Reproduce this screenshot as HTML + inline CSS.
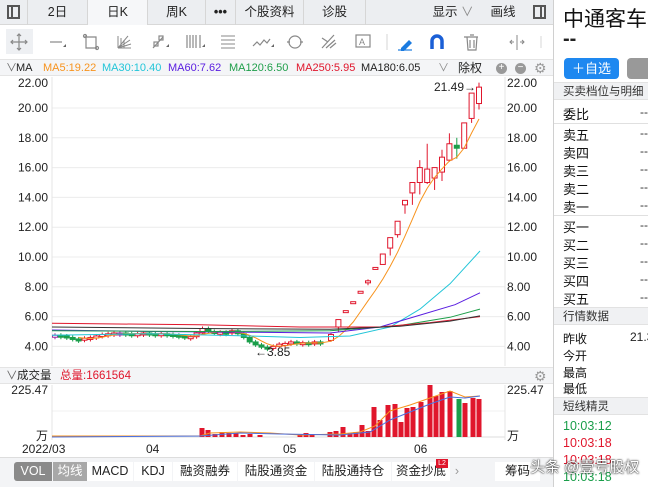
<!DOCTYPE html>
<html><head><meta charset="utf-8"><style>
*{margin:0;padding:0;box-sizing:border-box}
body{width:648px;height:487px;overflow:hidden;background:#fff;font-family:"Liberation Sans","Noto Sans CJK SC",sans-serif;font-size:12px;color:#222;position:relative}
.a{position:absolute;white-space:nowrap}
.tb{position:absolute;top:0;left:0;width:553px;height:25px;background:#eceef1;border-bottom:1px solid #d8d8d8}
.tb div{position:absolute;top:0;height:25px;line-height:25px;text-align:center;font-size:12.5px;border-right:1px solid #d6d6d6}
.rp{position:absolute;left:553px;top:0;width:95px;height:487px;border-left:1px solid #d0d0d0;background:#fff}
.hd{position:absolute;left:0;width:95px;height:18px;background:#f0f1f3;line-height:18px;padding-left:9px;font-size:11.5px;color:#333;border-top:1px solid #e2e2e2;border-bottom:1px solid #e2e2e2}
.rw{position:absolute;left:9px;font-size:13px;color:#111}
.dd{position:absolute;left:86px;font-size:12px;color:#333}
.bt div{position:absolute;top:462px;height:19px;line-height:19px;font-size:12.5px;text-align:center}
</style></head><body>
<div class="tb">
 <div style="left:0;width:28px"><span style="display:inline-block;width:13px;height:14px;border:2px solid #555;margin-top:5px;position:relative"><span style="position:absolute;left:2px;top:0;width:2px;height:10px;background:#555"></span></span></div>
 <div style="left:28px;width:60px">2日</div>
 <div style="left:88px;width:60px;background:#f6f7f9">日K</div>
 <div style="left:148px;width:58px">周K</div>
 <div style="left:206px;width:30px;font-weight:bold">•••</div>
 <div style="left:236px;width:68px">个股资料</div>
 <div style="left:304px;width:62px">诊股</div>
 <div style="left:366px;width:54px;border:none"></div>
 <div style="left:426px;width:54px;border:none">显示 <span style="color:#888">∨</span></div>
 <div style="left:482px;width:42px;border:none">画线</div>
 <div style="left:526px;width:27px;border:none"><span style="display:inline-block;width:13px;height:14px;border:2px solid #555;margin-top:5px;position:relative"><span style="position:absolute;right:2px;top:0;width:2px;height:10px;background:#555"></span></span></div>
</div>
<svg class="a" style="left:0;top:26px" width="553" height="32" fill="none" stroke="#888" stroke-width="1.2">
 <rect x="6" y="3" width="27" height="25" fill="#eef0f3" stroke="none"/>
 <path d="M19 8v16M11 16h16M17 10l2-2 2 2M17 22l2 2 2-2M13 14l-2 2 2 2M25 14l2 2-2 2"/>
 <path d="M50 16h12"/><path d="M63 21l3 0 0-3z" fill="#666" stroke="none"/>
 <path d="M86 9v13h11M84 11h12v12" /><circle cx="85" cy="10" r="1.5"/><circle cx="97" cy="22" r="1.5"/>
 <path d="M118 22l10-12M118 22l12-8M118 22l13-4M118 22l13 0M118 22v-12M121 22v-10M124 22v-8" stroke-width="1"/>
 <path d="M153 22l10-11"/><rect x="154" y="16" width="4" height="4"/><rect x="159" y="10" width="4" height="4"/><path d="M166 21l3 0 0-3z" fill="#666" stroke="none"/>
 <path d="M187 9v13M190 9v13M193 9v13M196 9v13M200 9v13"/><path d="M202 21l3 0 0-3z" fill="#666" stroke="none"/>
 <path d="M221 10h14M221 14h14M221 18h14M221 22h14" stroke-width="1"/>
 <path d="M253 20l4-4 3 3 4-5 3 3 3-4"/><path d="M271 21l3 0 0-3z" fill="#666" stroke="none"/>
 <circle cx="295" cy="16" r="6"/><path d="M287 16h3M300 16h3"/>
 <path d="M322 22l12-13M326 22l9-8M330 22l6-5M322 12l6 4"/>
 <rect x="356" y="9" width="14" height="12"/><text x="359" y="19" font-size="9" fill="#888" stroke="none">A</text>
 <path d="M387 8v16" stroke="#ddd"/>
 <path d="M401 22l8-8 3 3-8 8h-3z" fill="#1a7be0" stroke="none"/><path d="M398 24h14" stroke="#1a7be0"/>
 <path d="M432 23v-8a5 5 0 0 1 10 0v8" stroke="#1a5fd6" stroke-width="3.5"/>
 <path d="M464 11h14M467 11l1 13h8l1-13M470 9h4M470 14v8M474 14v8"/>
 <path d="M517 9v15M510 16h4M520 16h4M512 14l-2 2 2 2M522 14l2 2-2 2" stroke-width="1"/>
 <path d="M541 10v12" stroke="#ddd"/>
</svg>
<div class="a" style="left:0;top:59px;width:553px;height:17px;background:#f4f5f7;border-top:1px solid #e4e4e4;border-bottom:1px solid #e4e4e4;font-size:11px;line-height:16px">
 <span class="a" style="left:6px;color:#666">∨</span><span class="a" style="left:16px">MA</span>
 <span class="a" style="left:43px;color:#f7931e">MA5:19.22</span>
 <span class="a" style="left:102px;color:#22c5d8">MA30:10.40</span>
 <span class="a" style="left:168px;color:#5a1ee0">MA60:7.62</span>
 <span class="a" style="left:229px;color:#1e9e4a">MA120:6.50</span>
 <span class="a" style="left:296px;color:#e0162c">MA250:5.95</span>
 <span class="a" style="left:361px;color:#222">MA180:6.05</span>
 <span class="a" style="left:438px;color:#888">∨</span><span class="a" style="left:458px;font-size:12px">除权</span>
 <span class="a" style="left:496px;top:3px;width:11px;height:11px;border-radius:50%;background:#999;color:#fff;font-size:10px;line-height:10px;text-align:center">+</span>
 <span class="a" style="left:515px;top:3px;width:11px;height:11px;border-radius:50%;background:#999;color:#fff;font-size:10px;line-height:10px;text-align:center">−</span>
 <span class="a" style="left:534px;top:0px;color:#999;font-size:14px">⚙</span>
</div>
<svg id="ch" class="a" style="left:0;top:0" width="553" height="487"></svg>
<div class="a" style="left:0;top:367px;width:553px;height:17px;background:#f4f5f7;border-top:1px solid #e4e4e4;border-bottom:1px solid #e4e4e4;font-size:11.5px;line-height:16px">
 <span class="a" style="left:6px;color:#666">∨</span><span class="a" style="left:17px">成交量</span>
 <span class="a" style="left:60px;color:#e0162c">总量:1661564</span>
 <span class="a" style="left:534px;top:0;color:#999;font-size:14px">⚙</span>
</div>
<div class="a" style="left:0;top:457px;width:553px;height:30px;background:#f3f4f6;border-top:1px solid #ddd"></div>
<div class="bt">
 <div style="left:14px;width:38px;background:#8a8a8a;color:#fff;border-radius:3px 0 0 3px">VOL</div>
 <div style="left:53px;width:34px;background:#a8a8a8;color:#fff">均线</div>
 <div style="left:87px;width:46px;background:#fff">MACD</div>
 <div style="left:134px;width:38px;background:#fff">KDJ</div>
 <div style="left:173px;width:64px;background:#fff">融资融券</div>
 <div style="left:238px;width:76px;background:#fff">陆股通资金</div>
 <div style="left:315px;width:76px;background:#fff">陆股通持仓</div>
 <div style="left:392px;width:58px;background:#fff">资金抄底</div>
 <div style="left:451px;width:12px;color:#999">›</div>
 <div style="left:495px;width:45px;background:#fff">筹码</div>
</div>
<div class="a" style="left:436px;top:459px;width:12px;height:9px;background:#e0162c;color:#fff;font-size:7px;line-height:9px;text-align:center">L2</div>
<div class="rp">
 <div class="a" style="left:9px;top:3px;font-size:21px;color:#111">中通客车</div>
 <div class="a" style="left:9px;top:28px;font-size:20px;font-weight:bold;color:#222">--</div>
 <div class="a" style="left:10px;top:58px;width:55px;height:21px;background:#1e88f0;border-radius:4px;color:#fff;font-size:13px;line-height:21px;text-align:center">＋自选</div>
 <div class="a" style="left:73px;top:58px;width:30px;height:21px;background:#999;border-radius:4px"></div>
 <div class="hd" style="top:82px">买卖档位与明细</div>
 <div class="rw" style="top:104px">委比</div><div class="dd" style="top:105px">--</div>
 <div class="a" style="left:0;top:123px;width:95px;border-top:1px solid #e0e0e0"></div>
 <div class="rw" style="top:125px">卖五</div><div class="dd" style="top:126px">--</div>
 <div class="rw" style="top:143px">卖四</div><div class="dd" style="top:144px">--</div>
 <div class="rw" style="top:161px">卖三</div><div class="dd" style="top:162px">--</div>
 <div class="rw" style="top:179px">卖二</div><div class="dd" style="top:180px">--</div>
 <div class="rw" style="top:197px">卖一</div><div class="dd" style="top:198px">--</div>
 <div class="a" style="left:0;top:215px;width:95px;border-top:1px solid #e0e0e0"></div>
 <div class="rw" style="top:217px">买一</div><div class="dd" style="top:218px">--</div>
 <div class="rw" style="top:235px">买二</div><div class="dd" style="top:236px">--</div>
 <div class="rw" style="top:253px">买三</div><div class="dd" style="top:254px">--</div>
 <div class="rw" style="top:271px">买四</div><div class="dd" style="top:272px">--</div>
 <div class="rw" style="top:289px">买五</div><div class="dd" style="top:290px">--</div>
 <div class="hd" style="top:307px">行情数据</div>
 <div class="rw" style="top:330px;font-size:12px">昨收</div><div class="a" style="left:76px;top:330px">21.3</div>
 <div class="rw" style="top:347px;font-size:12px">今开</div>
 <div class="rw" style="top:364px;font-size:12px">最高</div>
 <div class="rw" style="top:380px;font-size:12px">最低</div>
 <div class="hd" style="top:397px">短线精灵</div>
 <div class="a" style="left:9px;top:419px;color:#1a9e4a;font-size:12.5px">10:03:12</div>
 <div class="a" style="left:9px;top:436px;color:#e0162c;font-size:12.5px">10:03:18</div>
 <div class="a" style="left:9px;top:453px;color:#e0162c;font-size:12.5px">10:03:18</div>
 <div class="a" style="left:9px;top:470px;color:#1a9e4a;font-size:12.5px">10:03:18</div>
</div>
<div class="a" style="left:530px;top:456px;font-size:15px;color:#fff;text-shadow:0 0 2px #333,0 0 1px #000">头条 @壹号股权</div>
<script>
var s=document.getElementById('ch'),h='';
function Y(p){return 108+(20-p)*14.9}
for(var p=4;p<=20;p+=2){h+='<line x1="52" x2="505" y1="'+Y(p)+'" y2="'+Y(p)+'" stroke="#ececec"/>';}
h+='<line x1="52" x2="52" y1="77" y2="366" stroke="#e4e4e4"/><line x1="505" x2="505" y1="77" y2="366" stroke="#e4e4e4"/>';
[22,20,18,16,14,12,10,8,6,4].forEach(function(p){var y=(p==22?87:Y(p)+4);var t=p.toFixed(2);h+='<text x="48" y="'+y+'" text-anchor="end" font-size="12" fill="#222">'+t+'</text><text x="507" y="'+y+'" font-size="12" fill="#222">'+t+'</text>';});
var early=[4.75,4.7,4.6,4.5,4.45,4.55,4.6,4.7,4.8,4.85,4.9,4.9,4.85,4.8,4.85,4.9,4.85,4.8,4.85,4.8,4.75,4.7,4.6,4.65,4.9,5.2,5.0,4.9,4.95,4.9,5.05,4.85,4.6,4.3,4.1,3.95,3.9,4.0,4.15,4.2,4.3,4.2,4.25,4.2,4.3,4.2];
var n0=early.length;
function X(i){return i<n0?55+i*5.9:331+(i-n0)*7.4}
var cl=[];
for(var i=0;i<n0;i++){var c=early[i],o=i?early[i-1]:c;var x=X(i);cl.push(c);
 var up=c>=o,col=up?'#e0162c':'#1a9e4a';if(Math.abs(c-o)<0.03)col='#9a2aa0';
 var t=Y(Math.max(o,c)),b=Y(Math.min(o,c));if(b-t<2)b=t+2;
 h+='<line x1="'+x+'" x2="'+x+'" y1="'+(t-2)+'" y2="'+(b+2)+'" stroke="'+col+'"/>';
 h+='<rect x="'+(x-2.5)+'" y="'+t+'" width="5" height="'+(b-t)+'" fill="'+(up?'#fff':col)+'" stroke="'+col+'"/>';}
var late=[[4.4,4.8,4.9,4.3],[5.3,5.8,5.8,5.0],[6.3,6.4,6.4,6.3],[7.0,7.0,7.0,7.0],[7.7,7.7,7.7,7.7],[8.4,8.4,8.5,8.1],[9.3,9.3,9.3,9.3],[9.5,10.2,10.2,9.5],[10.6,11.3,11.3,10.1],[11.5,12.4,12.4,11.3],[13.5,13.8,13.8,12.9],[14.3,15.0,15.0,13.5],[15.0,16.0,16.5,14.2],[15.0,15.9,17.6,14.9],[15.3,16.0,16.0,14.5],[15.7,16.7,17.2,15.1],[16.5,17.6,18.3,16.4],[17.5,17.3,18.0,16.6],[17.3,19.0,19.0,17.3],[19.3,21.0,21.0,19.0],[20.3,21.4,21.7,19.9]];
for(var j=0;j<late.length;j++){var d=late[j],i=n0+j,x=X(i);cl.push(d[1]);
 var up=d[1]>=d[0],col=up?'#e0162c':'#1a9e4a';var t=Y(Math.max(d[0],d[1])),b=Y(Math.min(d[0],d[1]));if(b-t<2)b=t+2;
 h+='<line x1="'+x+'" x2="'+x+'" y1="'+Y(d[2])+'" y2="'+Y(d[3])+'" stroke="'+col+'"/>';
 h+='<rect x="'+(x-2.5)+'" y="'+t+'" width="5" height="'+(b-t)+'" fill="'+(up?'#fff':col)+'" stroke="'+col+'"/>';}
var N=cl.length,xl=X(N-1);
h+='<text x="'+(xl-3)+'" y="91" text-anchor="end" font-size="12" fill="#222">21.49→</text>';
h+='<text x="255" y="356" font-size="12" fill="#222">←3.85</text>';
var pts='';for(var i=4;i<N;i++){var m=0;for(var k=0;k<5;k++)m+=cl[i-k];m/=5;pts+=X(i).toFixed(1)+','+Y(m).toFixed(1)+' ';}
h+='<polyline points="'+pts+'" fill="none" stroke="#f7931e"/>';
function pl(a,c){var p='';a.forEach(function(q){p+=q[0]+','+Y(q[1]).toFixed(1)+' '});h+='<polyline points="'+p+'" fill="none" stroke="'+c+'"/>';}
pl([[52,4.75],[150,4.85],[250,4.7],[300,4.6],[350,4.7],[390,5.3],[420,6.5],[450,8.2],[480,10.4]],'#22c5d8');
pl([[52,5.1],[150,5.0],[250,4.95],[330,4.9],[380,5.3],[420,6.1],[455,6.8],[480,7.6]],'#5a1ee0');
pl([[52,5.05],[200,5.0],[330,5.05],[400,5.4],[450,5.95],[480,6.5]],'#1e9e4a');
pl([[52,5.55],[200,5.45],[300,5.3],[380,5.3],[430,5.6],[480,6.0]],'#e0162c');
pl([[52,5.3],[200,5.2],[330,5.15],[400,5.35],[450,5.7],[480,6.05]],'#333');
h+='<line x1="52" x2="505" y1="437" y2="437" stroke="#ddd"/><line x1="52" x2="505" y1="411" y2="411" stroke="#f0f0f0"/><line x1="52" x2="52" y1="385" y2="440" stroke="#e4e4e4"/><line x1="505" x2="505" y1="385" y2="440" stroke="#e4e4e4"/>';
h+='<text x="48" y="394" text-anchor="end" font-size="12" fill="#222">225.47</text><text x="507" y="394" font-size="12" fill="#222">225.47</text>';
h+='<text x="48" y="440" text-anchor="end" font-size="12" fill="#222">万</text><text x="507" y="440" font-size="12" fill="#222">万</text>';
var vol=[[202,428],[208,430],[215,434],[222,432],[229,433],[236,433],[243,435],[250,434],[260,435],[300,434],[306,433],[312,434],[330,432],[336,431],[343,427],[350,433],[356,432],[362,425],[368,431],[374,407],[380,420],[388,405],[395,404],[401,422],[407,408],[413,407],[421,402],[430,385],[436,396],[442,392],[450,391],[459,399,1],[465,403],[473,398],[479,399]];
vol.forEach(function(v){h+='<rect x="'+(v[0]-2.5)+'" y="'+v[1]+'" width="5" height="'+(437-v[1])+'" fill="'+(v[2]?'#1a9e4a':'#e0162c')+'"/>';});
h+='<polyline points="52,436 200,436 210,433 240,432 270,433 300,435 340,434 360,432 375,426 390,411 410,405 430,398 450,391 465,397 480,396" fill="none" stroke="#f7931e"/>';
h+='<polyline points="52,437 200,436 240,433 280,434 340,435 370,432 390,420 410,412 430,404 450,397 465,398 480,396" fill="none" stroke="#4a6fe0"/>';
h+='<text x="22" y="453" font-size="12" fill="#222">2022/03</text><text x="146" y="453" font-size="12" fill="#222">04</text><text x="283" y="453" font-size="12" fill="#222">05</text><text x="414" y="453" font-size="12" fill="#222">06</text>';
s.innerHTML=h;
</script>
</body></html>
